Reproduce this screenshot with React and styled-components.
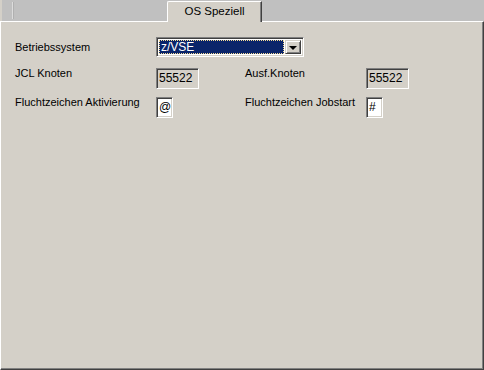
import styled, { createGlobalStyle } from 'styled-components'

const GlobalStyle = createGlobalStyle`
    html, body {
        margin: 0;
        padding: 0;
        background: #d4d0c8;
    }
    body {
        font-family: "Liberation Sans", Arial, sans-serif;
        font-size: 11px;
        color: #000;
    }
`

const Window = styled.div`
    width: 484px;
    height: 370px;
    display: flex;
    flex-direction: column;
    background: #d4d0c8;
    overflow: hidden;
`

const TabStrip = styled.div`
    height: 21px;
    flex: none;
    display: flex;
    align-items: flex-end;
    background: #c0c0c0;
    border-left: 2px solid #d4d0c8;
    box-sizing: border-box;
`

const Notch = styled.div`
    width: 1px;
    height: 17px;
    margin: 0 0 2px 10px;
    align-self: flex-end;
    background: #dcdcdc;
    box-shadow: 1px 0 #b0b0b0;
`

const Tab = styled.div`
    position: relative;
    z-index: 1;
    width: 95px;
    height: 21px;
    margin-left: 154px;
    margin-bottom: -1px;
    box-sizing: border-box;
    background: #d4d0c8;
    border-top: 1px solid #fff;
    border-left: 1px solid #fff;
    border-right: 1px solid #404040;
    border-top-left-radius: 2px;
    box-shadow: inset -1px 0 #808080;
    display: flex;
    justify-content: center;
    padding-top: 3px;
    line-height: 13px;
    font-size: 11.5px;
`

const Panel = styled.div`
    flex: 1;
    box-sizing: border-box;
    border-top: 1px solid #fff;
    border-left: 1px solid #fff;
    border-right: 1px solid #404040;
    border-bottom: 1px solid #404040;
    box-shadow: inset -1px -1px #808080;
    padding: 15px 0 0 14px;
    display: flex;
    flex-direction: column;
`

const Row = styled.div`
    display: flex;
    align-items: flex-start;
    margin-top: ${p => p.$top || 0}px;
    height: 21px;
`

const Label = styled.div`
    width: ${p => p.$width}px;
    flex: none;
    line-height: 13px;
    margin-top: ${p => p.$offset || 0}px;
    white-space: nowrap;
`

const Field = styled.div`
    width: ${p => p.$width}px;
    flex: none;
`

const Sunken = styled.div`
    box-sizing: border-box;
    height: 21px;
    width: ${p => p.$width}px;
    border: 1px solid;
    border-color: #808080 #fff #fff #808080;
    box-shadow: inset 1px 1px #404040, inset -1px -1px #d4d0c8;
    background: ${p => (p.$disabled ? '#d4d0c8' : '#fff')};
    padding: 3px 0 0 2px;
    line-height: 13px;
    font-size: 12px;
`

const Combo = styled.div`
    box-sizing: border-box;
    width: 148px;
    height: 20px;
    border: 1px solid;
    border-color: #808080 #fff #fff #808080;
    box-shadow: inset 1px 1px #404040, inset -1px -1px #d4d0c8;
    background: #fff;
    padding: 2px;
    display: flex;
    gap: 1px;
`

const Selection = styled.div`
    flex: 1;
    box-sizing: border-box;
    background: #0a246a;
    color: #fff;
    border: 1px dotted #f5db95;
    padding-left: 1px;
    line-height: 13px;
    font-size: 12px;
`

const DropButton = styled.div`
    width: 16px;
    flex: none;
    box-sizing: border-box;
    background: #d4d0c8;
    border: 1px solid;
    border-color: #d4d0c8 #404040 #404040 #d4d0c8;
    box-shadow: inset 1px 1px #fff, inset -1px -1px #808080;
    display: flex;
    align-items: center;
    justify-content: center;
`

const Arrow = styled.div`
    width: 0;
    height: 0;
    border-left: 4px solid transparent;
    border-right: 4px solid transparent;
    border-top: 4px solid #000;
    margin-top: 1px;
`

const App = () => (
    <Window>
        <GlobalStyle />
        <TabStrip>
            <Notch />
            <Tab>OS Speziell</Tab>
        </TabStrip>
        <Panel>
            <Row>
                <Label $width={141} $offset={4}>Betriebssystem</Label>
                <Combo>
                    <Selection>z/VSE</Selection>
                    <DropButton><Arrow /></DropButton>
                </Combo>
            </Row>
            <Row $top={10}>
                <Label $width={141} $offset={-1}>JCL Knoten</Label>
                <Field $width={89}>
                    <Sunken $width={43} $disabled>55522</Sunken>
                </Field>
                <Label $width={121} $offset={-1}>Ausf.Knoten</Label>
                <Field $width={43}>
                    <Sunken $width={43} $disabled>55522</Sunken>
                </Field>
            </Row>
            <Row $top={8}>
                <Label $width={141} $offset={-1}>Fluchtzeichen Aktivierung</Label>
                <Field $width={89}>
                    <Sunken $width={17}>@</Sunken>
                </Field>
                <Label $width={121} $offset={-1}>Fluchtzeichen Jobstart</Label>
                <Field $width={17}>
                    <Sunken $width={17}>#</Sunken>
                </Field>
            </Row>
        </Panel>
    </Window>
)

export default App
